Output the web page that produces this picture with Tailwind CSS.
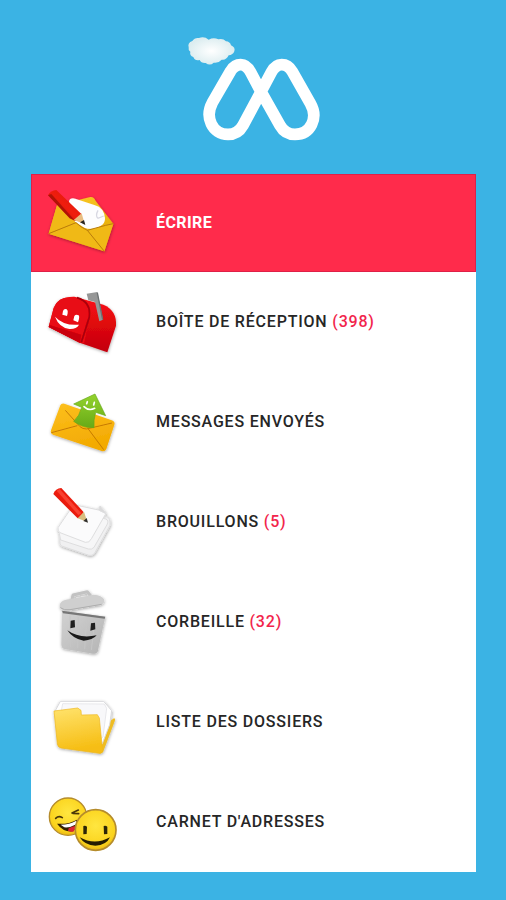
<!DOCTYPE html>
<html lang="fr">
<head>
    <meta charset="UTF-8">
    <meta name="viewport" content="width=device-width, initial-scale=1.0">
    <title>Messagerie</title>
    <script src="https://cdn.jsdelivr.net/npm/@tailwindcss/browser@4"></script>
</head>
<body class="bg-[#3bb3e4] min-h-screen font-['Roboto',sans-serif] text-base text-[#262626] pl-[31px] pr-[30px] pb-7">
    <!-- Logo -->
    <header class="flex justify-center pt-5 pb-6">
        <svg class="w-[170px] h-[130px]" viewBox="-2 0 510 390" role="img" aria-label="Logo">
            <defs>
                <radialGradient id="cloud"><stop offset="0" stop-color="#fff"/><stop offset="1" stop-color="#dcedf0"/></radialGradient>
                <linearGradient id="gold" x1="0" y1="0" x2="0.3" y2="1"><stop offset="0" stop-color="#fbc926"/><stop offset="1" stop-color="#e2a806"/></linearGradient>
                <linearGradient id="orange" x1="0" y1="0" x2="0.3" y2="1"><stop offset="0" stop-color="#fdc01d"/><stop offset="1" stop-color="#f3aa02"/></linearGradient>
                <linearGradient id="pencil" x1="0" y1="1" x2="1" y2="0"><stop offset="0" stop-color="#b90f05"/><stop offset="0.5" stop-color="#f01d0e"/><stop offset="1" stop-color="#d3170a"/></linearGradient>
                <linearGradient id="redbox" x1="0" y1="0" x2="0" y2="1"><stop offset="0" stop-color="#fb1014"/><stop offset="1" stop-color="#c3000c"/></linearGradient>
                <linearGradient id="green" x1="0" y1="0" x2="0" y2="1"><stop offset="0" stop-color="#93d32d"/><stop offset="1" stop-color="#68aa17"/></linearGradient>
                <linearGradient id="metal" x1="0" y1="0" x2="1" y2="1"><stop offset="0" stop-color="#d2d2d2"/><stop offset="1" stop-color="#b4b4b4"/></linearGradient>
                <linearGradient id="folder" x1="0" y1="0" x2="0.2" y2="1"><stop offset="0" stop-color="#ffe36d"/><stop offset="1" stop-color="#f6bd12"/></linearGradient>
                <radialGradient id="face" cx="0.5" cy="0.4" r="0.65"><stop offset="0" stop-color="#ffe640"/><stop offset="0.75" stop-color="#fbd31c"/><stop offset="1" stop-color="#e0a912"/></radialGradient>
                <filter id="shadow" x="-20%" y="-20%" width="140%" height="140%"><feDropShadow dx="1" dy="3" stdDeviation="4" flood-opacity="0.35"/></filter>
            </defs>
            <path fill="url(#cloud)" d="M57 82Q53 68 68 63Q75 52 88 54Q104 48 117 59Q132 51 146 58Q160 54 169 64Q181 65 184 76Q198 82 194 94Q190 105 177 106Q169 122 156 119Q145 131 132 128Q121 139 108 129Q94 130 90 120Q76 124 71 111Q59 107 62 95Q55 90 57 82Z"/>
            <path fill="none" stroke="#fff" stroke-width="35" stroke-linejoin="round" d="M274 215L243 157Q231 134 213 134Q195 134 183 153L128 248C105 291 127 343 175 343Q205 343 220 316L305 157Q317 134 336 134Q356 134 368 155L422 250C447 294 423 343 376 343Q346 343 331 316Z"/>
        </svg>
    </header>

    <!-- Menu -->
    <nav class="bg-white">
        <a href="#" class="flex items-center gap-[21px] h-[98px] pl-[3px] bg-[#ff2b4b] border border-[#df2048] text-white font-bold tracking-wide">
            <svg class="w-[100px] h-20" viewBox="30 54 300 240" aria-hidden="true">
                <g filter="url(#shadow)">
                    <path fill="url(#gold)" d="M96 121L196 96Q206 94 212 108L265 176L238 259L71 206Z"/>
                    <path fill="#fdfdfe" d="M132 110Q134 97 151 101L208 120Q239 128 240 162Q239 181 217 188Q197 195 177 185L150 159Z"/>
                    <path fill="#f0b915" d="M96 121L150 164Q180 207 216 184L265 176L238 259L71 206Z"/>
                    <path fill="#fdfdfe" d="M132 120L178 145L239 157Q239 183 211 190Q193 194 178 188L150 170Z"/>
                    <path fill="none" stroke="#d8d8e2" stroke-width="4" d="M219 136Q210 153 219 160L236 153"/>
                    <path fill="none" stroke="#b97b08" stroke-width="3" d="M71 206L153 173Q167 187 187 196L238 259M187 196L242 181L265 176"/>
                </g>
                <path fill="url(#pencil)" d="M69 91Q77 76 94 75L170 148L151 168L134 160Z"/>
                <path fill="#770900" opacity=".5" d="M69 91L134 160L151 168L79 87Z"/>
                <path fill="#e8be82" d="M146 165L170 145L179 177Z"/>
                <path fill="#29251f" d="M165 172L177 165L181 180Z"/>
            </svg>
            <span>ÉCRIRE</span>
        </a>

        <a href="#" class="flex items-center gap-[21px] h-[100px] pl-1 font-medium tracking-wider">
            <svg class="w-[100px] h-20" viewBox="0 6 300 240" aria-hidden="true">
                <g filter="url(#shadow)">
                    <path fill="url(#redbox)" d="M41 141L56 84Q69 49 118 50L205 74Q246 91 243 137L217 217L134 188Z"/>
                    <path fill="#e80912" d="M41 141L56 84Q69 47 117 52Q161 57 164 103L148 190L134 188Z"/>
                    <path fill="#c9000c" d="M43 135L139 164L134 188L41 141Z"/>
                    <path fill="none" stroke="#a8000a" stroke-width="5" d="M126 53Q169 66 163 111L139 187"/>
                </g>
                <path fill="#fff" d="M84 93Q87 85 95 88Q101 92 96 108L82 104ZM118 108Q123 101 131 106Q135 111 129 127L115 121Z"/>
                <path fill="#fff" d="M60 110Q86 138 132 134Q124 148 103 147Q72 142 60 110Z"/>
                <path fill="#969797" d="M155 41L187 36L204 119L193 124L180 66L160 61Z"/>
                <path fill="none" stroke="#6d7274" stroke-width="4" d="M187 38L203 119"/>
            </svg>
            <span>BOÎTE DE RÉCEPTION <span class="text-[#f2254c]">(398)</span></span>
        </a>

        <a href="#" class="flex items-center gap-[21px] h-[100px] pl-1 font-medium tracking-wider">
            <svg class="w-[100px] h-20" viewBox="0 6 300 240" aria-hidden="true">
                <g filter="url(#shadow)">
                    <path fill="url(#orange)" d="M76 76Q79 69 88 71L230 121Q241 125 238 134L214 207Q210 216 200 213L54 164Q45 160 48 151Z"/>
                    <path fill="none" stroke="#c77b04" stroke-width="3" d="M91 91L135 140Q143 147 154 147L231 129M49 158L127 137M160 147L206 209"/>
                </g>
                <path fill="url(#green)" stroke="#65a71a" stroke-width="2" stroke-linejoin="round" d="M116 72L180 42L212 107L182 97Q175 121 177 143Q144 145 116 124Q134 108 140 82Z"/>
                <path fill="none" stroke="#fff" stroke-width="5" stroke-linecap="round" d="M157 65L155 71M178 67L176 75M147 80Q161 94 179 85"/>
            </svg>
            <span>MESSAGES ENVOYÉS</span>
        </a>

        <a href="#" class="flex items-center gap-[21px] h-[100px] pl-1 font-medium tracking-wider">
            <svg class="w-[100px] h-20" viewBox="0 21 300 240" aria-hidden="true">
                <g filter="url(#shadow)" stroke="#dededf" stroke-width="3" stroke-linejoin="round">
                    <path fill="#f0f0f1" d="M75 191L85 151L216 125Q227 129 225 151L178 236Q171 243 162 241L80 213Q73 209 75 191Z"/>
                    <path fill="#f6f6f7" d="M73 176L107 108L213 132Q222 137 216 149L177 217Q170 225 160 222L77 195Z"/>
                    <path fill="#fbfbfc" d="M69 158L111 96Q116 89 126 91L191 105L213 115L170 190Q163 205 151 202L75 173Q68 169 69 158Z"/>
                    <path fill="#dadadb" d="M191 105L195 93L213 116Z"/>
                </g>
                <path fill="url(#pencil)" d="M55 57Q61 40 79 39L145 110Q146 126 128 130Z"/>
                <path fill="#ff5847" opacity=".6" d="M65 47L74 42L139 115L130 120Z"/>
                <path fill="#d8bd7f" d="M128 130L147 110L157 141Z"/>
                <path fill="#302f2b" d="M145 138L155 129L159 143Z"/>
            </svg>
            <span>BROUILLONS <span class="text-[#f2254c]">(5)</span></span>
        </a>

        <a href="#" class="flex items-center gap-[21px] h-[100px] pl-1 font-medium tracking-wider">
            <svg class="w-[100px] h-20" viewBox="0 6 300 240" aria-hidden="true">
                <g filter="url(#shadow)">
                    <path fill="url(#metal)" d="M81 92L211 110L188 215Q184 223 174 221L89 207Q79 205 79 193Z"/>
                    <path fill="#777" d="M81 92L211 110L209 116L84 100Z"/>
                    <path fill="none" stroke="#c6c6c6" stroke-width="3" d="M105 107L106 201M130 111L128 205M155 115L149 208M180 118L169 210"/>
                    <path fill="none" stroke="#c2c2c2" stroke-width="9" stroke-linejoin="round" d="M111 58L114 45L157 35L167 48"/>
                    <path fill="#cfcfcf" d="M75 72Q77 63 93 59L176 44Q201 46 207 58Q210 70 197 75L98 92Q79 93 75 82Z"/>
                    <path fill="none" stroke="#adadad" stroke-width="3" d="M76 83Q87 92 105 89L200 73"/>
                </g>
                <path fill="#202020" d="M107 122L119 120L120 142L106 145ZM168 130L180 128L181 148L166 152Z"/>
                <path fill="#191919" d="M97 151Q133 177 185 166Q173 181 146 182Q115 178 97 151Z"/>
            </svg>
            <span>CORBEILLE <span class="text-[#f2254c]">(32)</span></span>
        </a>

        <a href="#" class="flex items-center gap-[21px] h-[100px] pl-1 font-medium tracking-wider">
            <svg class="w-[100px] h-20" viewBox="0 -9 300 240" aria-hidden="true">
                <g filter="url(#shadow)">
                    <path fill="#eebc21" d="M210 119L237 100Q242 101 239 109L204 202L194 206Z"/>
                    <path fill="#fff" stroke="#d9d9dc" stroke-width="3" d="M62 75L76 49L206 49L230 77L224 119L201 178L76 157Z"/>
                    <path fill="#f8f8fa" stroke="#dedee2" stroke-width="2" d="M79 77L83 56L208 57L215 70L204 156L184 173Z"/>
                    <path fill="url(#folder)" stroke="#eeb71c" stroke-width="2" stroke-linejoin="round" d="M57 78L128 69L138 76L139 90L187 89L193 99L203 199Q201 206 192 205L78 189Q69 187 67 177Z"/>
                </g>
            </svg>
            <span>LISTE DES DOSSIERS</span>
        </a>

        <a href="#" class="flex items-center gap-[21px] h-[100px] pl-1 font-medium tracking-wider">
            <svg class="w-[100px] h-20" viewBox="0 -9 300 240" aria-hidden="true">
                <circle cx="99" cy="95" r="56" fill="url(#face)" stroke="#b58c2c" stroke-width="4"/>
                <path fill="none" stroke="#4a3709" stroke-width="5" stroke-linecap="round" d="M62 100Q71 91 82 98M111 84L130 75M114 85L131 86"/>
                <path fill="#342000" d="M66 116Q99 119 126 104Q132 126 113 139Q85 142 66 116Z"/>
                <path fill="#fff" d="M77 119Q103 119 124 107L124 118Q105 129 88 127Z"/>
                <path fill="#df2332" d="M101 130Q116 122 126 123L115 140Q107 141 99 138Z"/>
                <circle cx="182" cy="135" r="61" fill="url(#face)" stroke="#b58c2c" stroke-width="5"/>
                <path fill="#2b2507" d="M145 123Q151 120 156 125L155 147L145 148ZM206 123Q212 120 217 125L217 147L207 148Z"/>
                <path fill="#251d02" d="M134 157Q179 182 225 157Q214 181 181 182Q149 181 134 157Z"/>
            </svg>
            <span>CARNET D'ADRESSES</span>
        </a>
    </nav>
</body>
</html>
